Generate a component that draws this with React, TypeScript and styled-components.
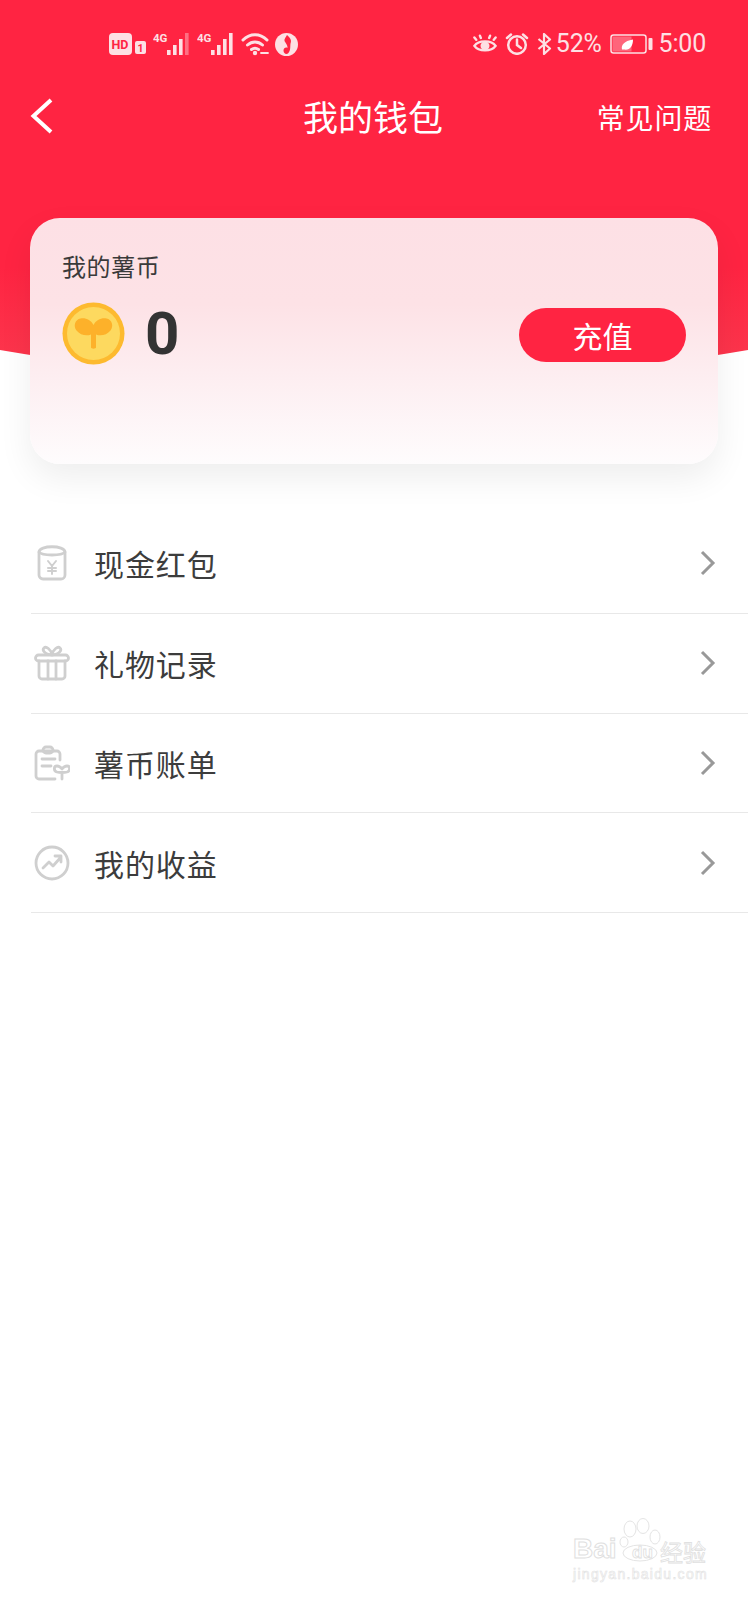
import React from "react";
import styled, { createGlobalStyle } from "styled-components";

const Global = createGlobalStyle`
  html, body { margin: 0; padding: 0; background: #fff; }
  * { box-sizing: border-box; }
  body { font-family: "Noto Sans CJK SC", "Noto Sans", sans-serif; }
`;

const Page = styled.div`
  position: relative;
  width: 748px;
  height: 1600px;
  overflow: hidden;
  background: #fff;
`;

const Hero = styled.header`
  height: 382px;
  background: linear-gradient(180deg, #ff2442 0%, #ff2442 70%, #fb3a4f 100%);
  clip-path: circle(2200px at 50% calc(100% - 2200px));
  color: #fff;
`;

const StatusBar = styled.div`
  display: flex;
  justify-content: space-between;
  align-items: center;
  height: 44px;
  padding: 22px 42px 0 109px;
  box-sizing: content-box;
  color: #fde0e4;
`;

const StatusGroup = styled.div<{ $gap: number }>`
  display: flex;
  align-items: center;
  gap: ${(p) => p.$gap}px;
`;

const StatusText = styled.span<{ $offset: number }>`
  margin-left: ${(p) => p.$offset}px;
  font-family: Roboto, "Liberation Sans", sans-serif;
  font-size: 25px;
  line-height: 44px;
  letter-spacing: -0.2px;
`;

const NavBar = styled.nav`
  display: grid;
  grid-template-columns: 1fr auto 1fr;
  align-items: center;
  height: 60px;
  margin-top: 21px;
  padding: 0 36px 0 34px;
`;

const BackIcon = styled.svg`
  width: 24px;
  height: 36px;
  margin: 0 0 2px -4px;
  fill: none;
  stroke: #fff;
  stroke-width: 4;
`;

const Title = styled.h1`
  margin: 0 0 2px;
  font-size: 35px;
  font-weight: 400;
  line-height: 58px;
`;

const NavLink = styled.span`
  justify-self: end;
  font-size: 28px;
  line-height: 60px;
  letter-spacing: 0.8px;
`;

const Card = styled.section`
  position: relative;
  height: 246px;
  margin: -164px 30px 0;
  padding: 30px 32px 0;
  border-radius: 30px;
  background: linear-gradient(180deg, #fde0e5 0%, #fde2e6 35%, #fdeef1 65%, #fefcfd 100%);
  box-shadow: 0 14px 34px rgba(0, 0, 0, 0.07);
`;

const CardLabel = styled.div`
  font-size: 24px;
  line-height: 36px;
  letter-spacing: 0.6px;
  color: #3a3a3a;
`;

const BalanceRow = styled.div`
  display: flex;
  align-items: center;
  height: 63px;
  margin-top: 18px;
`;

const CoinIcon = styled.svg`
  flex: none;
  width: 63px;
  height: 63px;
`;

const Balance = styled.span`
  flex: 1;
  margin-left: 20px;
  font-family: Roboto, "Liberation Sans", sans-serif;
  font-size: 60px;
  font-weight: 700;
  line-height: 63px;
  color: #333;
`;

const TopUp = styled.button`
  width: 167px;
  height: 54px;
  margin-top: 3px;
  padding: 0;
  border: 0;
  border-radius: 27px;
  background: #ff2442;
  color: #fff;
  font-family: inherit;
  font-size: 30px;
  line-height: 54px;
`;

const Menu = styled.ul`
  margin: 50px 0 0;
  padding: 0;
  list-style: none;
`;

const Row = styled.li`
  display: flex;
  align-items: center;
  height: 99.8px;
  margin-left: 31px;
  padding-right: 32px;
  border-bottom: 1px solid #e8e8e8;
`;

const RowIcon = styled.svg`
  flex: none;
  width: 36px;
  height: 36px;
  margin-left: 3px;
  fill: none;
  stroke: #cfcfcf;
  stroke-width: 2.8;
  stroke-linecap: round;
  stroke-linejoin: round;
`;

const RowLabel = styled.span`
  flex: 1;
  margin-left: 24px;
  font-size: 30px;
  line-height: 40px;
  color: #3c3c3c;
  letter-spacing: 0.9px;
`;

const Chevron = styled.svg`
  flex: none;
  width: 16px;
  height: 26px;
  fill: none;
  stroke: #999;
  stroke-width: 3;
`;

const Watermark = styled.div`
  position: absolute;
  left: 572px;
  top: 1516px;
  width: 140px;
  height: 68px;
  color: #fff;
`;

const MarkPaw = styled.svg`
  position: absolute;
  left: 47px;
  top: 2px;
  width: 42px;
  height: 44px;
  fill: #fff;
  stroke: #e4e4e4;
  stroke-width: 1;
`;

const MarkBrand = styled.span`
  position: absolute;
  left: 1px;
  top: 19px;
  font-family: "Liberation Sans", sans-serif;
  font-size: 28px;
  font-weight: 700;
  line-height: 28px;
  -webkit-text-stroke: 1px #e0e0e0;
`;

const MarkDu = styled.span`
  position: absolute;
  left: 60px;
  top: 28px;
  font-family: "Liberation Sans", sans-serif;
  font-size: 17px;
  font-weight: 700;
  line-height: 18px;
  -webkit-text-stroke: 0.8px #e0e0e0;
`;

const MarkCn = styled.span`
  position: absolute;
  left: 88px;
  top: 22px;
  font-size: 23px;
  line-height: 27px;
  white-space: nowrap;
  -webkit-text-stroke: 0.8px #e0e0e0;
`;

const MarkUrl = styled.span`
  position: absolute;
  left: 1px;
  top: 50px;
  font-family: "Liberation Sans", sans-serif;
  font-size: 14px;
  line-height: 17px;
  letter-spacing: 1.3px;
  white-space: nowrap;
  color: #fff;
  -webkit-text-stroke: 0.6px #e2e2e2;
`;

const SmallText: React.FC<{ x: number; y: number; size: number; children: string; fill?: string }> = ({ x, y, size, children, fill = "currentColor" }) => (
  <text x={x} y={y} fontSize={size} fontWeight={700} fontFamily="Roboto, Liberation Sans, sans-serif" fill={fill}>
    {children}
  </text>
);

const Bars: React.FC<{ dim?: boolean }> = ({ dim }) => (
  <svg width="38" height="24" viewBox="0 0 38 24">
    <SmallText x={0} y={10} size={11.5}>4G</SmallText>
    <g fill="currentColor">
      <rect x="14" y="18" width="3.600" height="5" />
      <rect x="20" y="13" width="3.600" height="10" />
      <rect x="26" y="7" width="3.600" height="16" />
      <rect x="32" y="1" width="3.600" height="22" opacity={dim ? 0.4 : 1} />
    </g>
  </svg>
);

const StatusLeft = () => (
  <StatusGroup $gap={6}>
    <svg width="38" height="24" viewBox="0 0 38 24">
      <rect x="0" y="1" width="23" height="22" rx="4" fill="currentColor" />
      <SmallText x={2.5} y={17} size={12.5} fill="#ff2442">HD</SmallText>
      <rect x="26" y="9" width="11" height="13" rx="2" fill="currentColor" />
      <SmallText x={28.5} y={20} size={10.5} fill="#ff2442">1</SmallText>
    </svg>
    <Bars dim />
    <Bars />
    <svg width="28" height="24" viewBox="0 0 28 24" fill="none" stroke="currentColor" strokeWidth="3" strokeLinecap="round">
      <path d="M2 8C9 1 19 1 26 8" />
      <path d="M6.500 13c4.500-4 10.500-4 15 0" />
      <path d="M10.500 17.500c2-1.500 5-1.500 7 0" />
      <circle cx="14" cy="21" r="2.200" fill="currentColor" stroke="none" />
      <path d="M20 21h7" strokeWidth="1.800" />
    </svg>
    <svg width="23" height="23" viewBox="0 0 23 23">
      <circle cx="11.500" cy="11.500" r="11.500" fill="currentColor" />
      <path d="M12 2c3 3 5 5 3.500 8.500C15 14 16 17 13 20.500c-2 1-4.500 0-4.500-3 0-2.500 2.500-3.500 4-2.500.4-3-2-5-3-7C9 6 11 4 12 2z" fill="#ff2442" />
    </svg>
  </StatusGroup>
);

const StatusRight = () => (
  <StatusGroup $gap={8}>
    <svg width="24" height="20" viewBox="0 0 26 20" fill="none" stroke="currentColor" strokeWidth="2.600" strokeLinecap="round">
      <path d="M1.500 12C6 5.500 20 5.500 24.500 12 20 18.500 6 18.500 1.500 12z" />
      <circle cx="13" cy="12" r="3.600" fill="currentColor" />
      <path d="M3.500 5.500 1.500 3M8.500 3.500 7.500 1M17.500 3.500l1-2.500M22.500 5.500l2-2.500" />
    </svg>
    <svg width="24" height="22" viewBox="0 0 24 22" fill="none" stroke="currentColor" strokeWidth="2.500" strokeLinecap="round">
      <circle cx="12" cy="12" r="8.800" />
      <path d="M12 6.500V12l4 3M2 5l4-3.500M22 5l-4-3.500" />
    </svg>
    <svg width="15" height="22" viewBox="0 0 15 22" fill="none" stroke="currentColor" strokeWidth="2.200" strokeLinejoin="round">
      <path d="M1.500 6 13 15.500 7 21V1l6 5.500L1.500 16" />
    </svg>
    <StatusText $offset={-4}>52%</StatusText>
    <svg width="43" height="20" viewBox="0 0 43 20">
      <rect x="1" y="1" width="35" height="18" rx="2.500" fill="none" stroke="currentColor" strokeWidth="1.500" />
      <rect x="2.500" y="2.500" width="19" height="15" fill="currentColor" opacity="0.35" />
      <rect x="38.500" y="4" width="4" height="12" rx="1" fill="currentColor" />
      <path d="M12 15.500c-1-4.500 2-8.500 11-10 0 6.500-3 11-9 10z" fill="#fff" />
    </svg>
    <StatusText $offset={-2}>5:00</StatusText>
  </StatusGroup>
);

const Coin = () => (
  <CoinIcon viewBox="0 0 63 63">
    <circle cx="31.500" cy="31.500" r="31" fill="#fdba2f" />
    <circle cx="31.500" cy="31.500" r="26.500" fill="#fdd95f" />
    <path
      d="M31.500 23c-2.500-5-8-7.500-13-6.500-5.500 1-7.500 7.500-4 12 3.500 4.500 10 6 14.500 4v13c0 1.500 5 1.500 5 0V32.500c4.500 2 11 .5 14.500-4 3.500-4.500 1.500-11-4-12-5-1-10.500 1.500-13 6.500z"
      fill="#fdb12a"
    />
  </CoinIcon>
);

const icons: React.ReactNode[] = [
  <>
    <path d="M5 7c0-7 26-7 26 0v23a4 4 0 0 1-4 4H9a4 4 0 0 1-4-4z" />
    <path d="M5 7c3 4 23 4 26 0" />
    <path d="M14 16l4 5 4-5M18 21v8M14 23h8M14 26h8" strokeWidth="2" />
  </>,
  <>
    <path d="M5 16v15a3 3 0 0 0 3 3h20a3 3 0 0 0 3-3V16" />
    <rect x="1.500" y="10" width="33" height="6" rx="3" />
    <path d="M14 16v18M22 16v18" />
    <path d="M18 10c-1-6-6-9-8-7-2 2 0 6 8 7zM18 10c1-6 6-9 8-7 2 2 0 6-8 7z" />
  </>,
  <>
    <path d="M26 15V9a3 3 0 0 0-3-3H5a3 3 0 0 0-3 3v22a3 3 0 0 0 3 3h16" />
    <rect x="9" y="2" width="10" height="6" rx="3" />
    <path d="M8 14h13M8 21h9" />
    <path d="M28 24c-1.500-2-3-3-5-3-3.500 0-3.500 5 0 6 2 .5 4 .5 5 .5s3 0 5-.5c3.500-1 3.500-6 0-6-2 0-3.500 1-5 3zM28 28v6" />
  </>,
  <>
    <circle cx="18" cy="18" r="16" />
    <path d="M9 23l6-6 4 4 8-9M21 11h6v6" />
  </>,
];

const items = ["现金红包", "礼物记录", "薯币账单", "我的收益"];

export default function App() {
  return (
    <Page>
      <Global />
      <Hero>
        <StatusBar>
          <StatusLeft />
          <StatusRight />
        </StatusBar>
        <NavBar>
          <BackIcon viewBox="0 0 24 36">
            <path d="M21 2 3.500 18 21 34" />
          </BackIcon>
          <Title>我的钱包</Title>
          <NavLink>常见问题</NavLink>
        </NavBar>
      </Hero>
      <Card>
        <CardLabel>我的薯币</CardLabel>
        <BalanceRow>
          <Coin />
          <Balance>0</Balance>
          <TopUp>充值</TopUp>
        </BalanceRow>
      </Card>
      <Menu>
        {items.map((label, i) => (
          <Row key={label}>
            <RowIcon viewBox="0 0 36 36">{icons[i]}</RowIcon>
            <RowLabel>{label}</RowLabel>
            <Chevron viewBox="0 0 16 26">
              <path d="M2 2l11 11L2 24" />
            </Chevron>
          </Row>
        ))}
      </Menu>
      <Watermark>
        <MarkBrand>Bai</MarkBrand>
        <MarkPaw viewBox="0 0 42 44">
          <ellipse cx="21" cy="35" rx="17" ry="8" />
          <ellipse cx="11" cy="11" rx="6" ry="8" />
          <ellipse cx="24" cy="8" rx="6" ry="7.500" />
          <ellipse cx="36" cy="19" rx="5" ry="7" />
          <ellipse cx="5" cy="24" rx="4" ry="5" />
        </MarkPaw>
        <MarkDu>du</MarkDu>
        <MarkCn>经验</MarkCn>
        <MarkUrl>jingyan.baidu.com</MarkUrl>
      </Watermark>
    </Page>
  );
}
